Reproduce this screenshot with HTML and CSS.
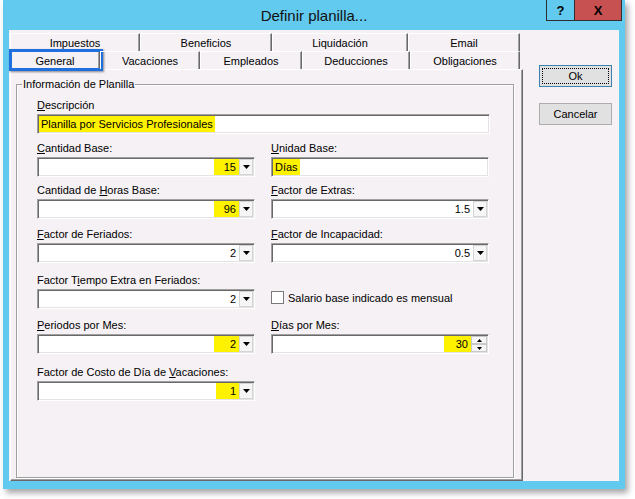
FILE: index.html
```html
<!DOCTYPE html>
<html lang="es">
<head>
<meta charset="utf-8">
<title>Definir planilla...</title>
<link rel="stylesheet" href="styles.css">
</head>
<body>
<div class="window">
  <div class="titlebar">
    <div class="title">Definir planilla...</div>
    <div class="caption">
      <span class="cap cap-help">?</span>
      <span class="cap cap-close">X</span>
    </div>
  </div>
  <div class="client">
    <div class="tabctl">
      <div class="tab-row">
        <div class="tab w-imp">Impuestos</div>
        <div class="tab w-ben">Beneficios</div>
        <div class="tab w-liq">Liquidación</div>
        <div class="tab w-email">Email</div>
      </div>
      <div class="tab-row">
        <div class="tab w-gen active">General<span class="focus-mark"></span></div>
        <div class="tab w-vac">Vacaciones</div>
        <div class="tab w-emp">Empleados</div>
        <div class="tab w-ded">Deducciones</div>
        <div class="tab w-obl">Obligaciones</div>
      </div>
      <div class="panel">
        <div class="group">
          <span class="group-title">Información de Planilla</span>
          <div class="form">
            <div class="field span2">
              <div class="lbl"><u>D</u>escripción</div>
              <div class="box box-wide"><span class="hl hl-text">Planilla por Servicios Profesionales</span></div>
            </div>

            <div class="field">
              <div class="lbl"><u>C</u>antidad Base:</div>
              <div class="box combo"><span class="val hl">15</span><span class="dd"><svg width="7" height="4" viewBox="0 0 7 4"><path d="M0 0H7L3.5 4Z"/></svg></span></div>
            </div>
            <div class="field">
              <div class="lbl"><u>U</u>nidad Base:</div>
              <div class="box"><span class="hl hl-text">Días</span></div>
            </div>

            <div class="field">
              <div class="lbl">Cantidad de <u>H</u>oras Base:</div>
              <div class="box combo"><span class="val hl">96</span><span class="dd"><svg width="7" height="4" viewBox="0 0 7 4"><path d="M0 0H7L3.5 4Z"/></svg></span></div>
            </div>
            <div class="field">
              <div class="lbl"><u>F</u>actor de Extras:</div>
              <div class="box combo"><span class="val">1.5</span><span class="dd"><svg width="7" height="4" viewBox="0 0 7 4"><path d="M0 0H7L3.5 4Z"/></svg></span></div>
            </div>

            <div class="field">
              <div class="lbl"><u>F</u>actor de Feriados:</div>
              <div class="box combo"><span class="val">2</span><span class="dd"><svg width="7" height="4" viewBox="0 0 7 4"><path d="M0 0H7L3.5 4Z"/></svg></span></div>
            </div>
            <div class="field">
              <div class="lbl"><u>F</u>actor de Incapacidad:</div>
              <div class="box combo"><span class="val">0.5</span><span class="dd"><svg width="7" height="4" viewBox="0 0 7 4"><path d="M0 0H7L3.5 4Z"/></svg></span></div>
            </div>

            <div class="field">
              <div class="lbl">Factor T<u>i</u>empo Extra en Feriados:</div>
              <div class="box combo"><span class="val">2</span><span class="dd"><svg width="7" height="4" viewBox="0 0 7 4"><path d="M0 0H7L3.5 4Z"/></svg></span></div>
            </div>
            <div class="field check-field">
              <span class="checkbox"></span><span>Salario base indicado es mensual</span>
            </div>

            <div class="field">
              <div class="lbl"><u>P</u>eriodos por Mes:</div>
              <div class="box combo"><span class="val hl">2</span><span class="dd"><svg width="7" height="4" viewBox="0 0 7 4"><path d="M0 0H7L3.5 4Z"/></svg></span></div>
            </div>
            <div class="field">
              <div class="lbl"><u>D</u>ías por Mes:</div>
              <div class="box combo"><span class="val hl hl-spin">30</span><span class="spin"><span class="spin-btn"><svg width="5" height="3" viewBox="0 0 5 3"><path d="M0 3H5L2.5 0Z"/></svg></span><span class="spin-btn"><svg width="5" height="3" viewBox="0 0 5 3"><path d="M0 0H5L2.5 3Z"/></svg></span></span></div>
            </div>

            <div class="field">
              <div class="lbl">Factor de Costo de Día de <u>V</u>acaciones:</div>
              <div class="box combo"><span class="val hl hl-one">1</span><span class="dd"><svg width="7" height="4" viewBox="0 0 7 4"><path d="M0 0H7L3.5 4Z"/></svg></span></div>
            </div>
          </div>
        </div>
      </div>
    </div>
    <div class="side">
      <div class="btn btn-default"><span class="focus-rect">Ok</span></div>
      <div class="btn">Cancelar</div>
    </div>
  </div>
</div>
</body>
</html>
```

FILE: styles.css
```css
* { box-sizing: border-box; }

html, body {
  margin: 0;
  padding: 0;
  background: #ffffff;
}

body {
  width: 635px;
  height: 499px;
  overflow: hidden;
  font-family: "Liberation Sans", Arial, sans-serif;
  font-size: 11px;
  color: #000;
}

.window {
  margin-left: 3px;
  width: 622px;
  height: 489px;
  background: #62c9ef;
  padding: 0 6px 8px 6px;
  display: flex;
  flex-direction: column;
  box-shadow: 3px 4px 6px rgba(0, 0, 0, 0.35);
}

/* ---------- title bar ---------- */
.titlebar {
  height: 30px;
  margin: 0 -6px;
  display: grid;
  grid-template-columns: 1fr auto 1fr;
  align-items: start;
}

.title {
  grid-column: 2;
  align-self: center;
  font-size: 15px;
  color: #111;
  padding-top: 1px;
}

.caption {
  grid-column: 3;
  justify-self: end;
  display: flex;
  margin-right: 3px;
}

.cap {
  height: 21px;
  display: flex;
  align-items: center;
  justify-content: center;
  font-weight: bold;
  font-size: 13px;
  border: 1px solid #2e2e2e;
  border-top: none;
}

.cap-help {
  width: 29px;
  color: #000;
}

.cap-close {
  width: 47px;
  background: #c75050;
  border-left: none;
  color: #000;
}

/* ---------- client ---------- */
.client {
  flex: 1;
  display: flex;
  background: #f5f1f5;
}

.tabctl {
  margin-left: 1px;
  padding-top: 3px;
  width: 513px;
  display: flex;
  flex-direction: column;
}

.tab-row {
  display: flex;
  height: 18px;
}

.tab {
  position: relative;
  height: 18px;
  display: flex;
  align-items: center;
  justify-content: center;
  border-top: 1px solid #ffffff;
  border-left: 1px solid #ffffff;
  border-right: 1px solid #696969;
  box-shadow: inset -1px 0 0 #a0a0a0;
  padding-top: 1px;
}

.w-imp { width: 130px; }
.w-ben { width: 132px; }
.w-liq { width: 136px; }
.w-email { width: 112px; }
.w-gen { width: 90px; }
.w-vac { width: 100px; }
.w-emp { width: 102px; }
.w-ded { width: 108px; }
.w-obl { width: 110px; }

.focus-mark {
  position: absolute;
  left: -2px;
  top: -3px;
  width: 94px;
  height: 22px;
  border: 3px solid #1f6fde;
  box-shadow: 1px 1px 2px rgba(0, 0, 0, 0.45);
}

.panel {
  flex: 1;
  border-top: 1px solid #ffffff;
  border-left: 1px solid #ffffff;
  border-right: 1px solid #696969;
  border-bottom: 1px solid #696969;
  box-shadow: inset -1px -1px 0 #a0a0a0;
}

.group {
  position: relative;
  margin: 14px 0 0 5px;
  width: 498px;
  height: 394px;
  border: 1px solid #a0a0a0;
  box-shadow: inset 1px 1px 0 #ffffff, 1px 1px 0 #ffffff;
  padding: 13px 0 0 20px;
}

.group-title {
  position: absolute;
  left: 5px;
  top: -8px;
  line-height: 14px;
  padding: 0 1px;
  background: #f5f1f5;
}

.form {
  display: grid;
  grid-template-columns: 218px 218px;
  column-gap: 16px;
  grid-template-rows: 43px 42px 44px 46px 45px 47px auto;
}

.field { display: flex; flex-direction: column; }
.span2 { grid-column: 1 / span 2; }

.lbl {
  line-height: 14px;
  height: 14px;
  margin-bottom: 2px;
  white-space: nowrap;
}

.box {
  height: 20px;
  background: #ffffff;
  border-style: solid;
  border-width: 1px;
  border-color: #a0a0a0 #ffffff #ffffff #a0a0a0;
  box-shadow: inset 1px 1px 0 #696969, inset -1px -1px 0 #e3e3e3;
  display: flex;
  align-items: stretch;
  padding: 1px 1px 1px 1px;
}

.box-wide { width: 453px; }

.combo { justify-content: flex-end; }

.val {
  display: flex;
  align-items: center;
  justify-content: flex-end;
  padding-right: 3px;
  min-width: 25px;
}

.hl { background: #fff200; }
.hl-spin { min-width: 27px; }
.hl-one { min-width: 23px; }

.hl-text {
  display: flex;
  align-items: center;
  padding: 0 2px 0 2px;
}

.dd {
  width: 14px;
  display: flex;
  align-items: center;
  justify-content: center;
  background: #f6f6f6;
  border: 1px solid #d4d4d4;
}

.spin {
  width: 16px;
  display: flex;
  flex-direction: column;
}

.spin-btn {
  flex: 1;
  display: flex;
  align-items: center;
  justify-content: center;
  background: #f6f6f6;
  border: 1px solid #c8c8c8;
}

.check-field {
  flex-direction: row;
  align-items: center;
  padding-top: 18px;
  align-self: start;
  gap: 4px;
  height: 31px;
}

.check-field .checkbox {
  width: 13px;
  height: 13px;
  background: #ffffff;
  border: 1px solid #7a7a7a;
}

/* ---------- right column buttons ---------- */
.side {
  margin-left: 16px;
  padding-top: 35px;
  display: flex;
  flex-direction: column;
  gap: 16px;
}

.btn {
  width: 73px;
  height: 22px;
  display: flex;
  align-items: center;
  justify-content: center;
  background: #e1e1e1;
  border: 1px solid #adadad;
  font-size: 11px;
}

.btn-default {
  border-color: #3c7fb1;
  padding: 2px;
}

.focus-rect {
  width: 100%;
  height: 100%;
  display: flex;
  align-items: center;
  justify-content: center;
  border: 1px dotted #000;
}
```
